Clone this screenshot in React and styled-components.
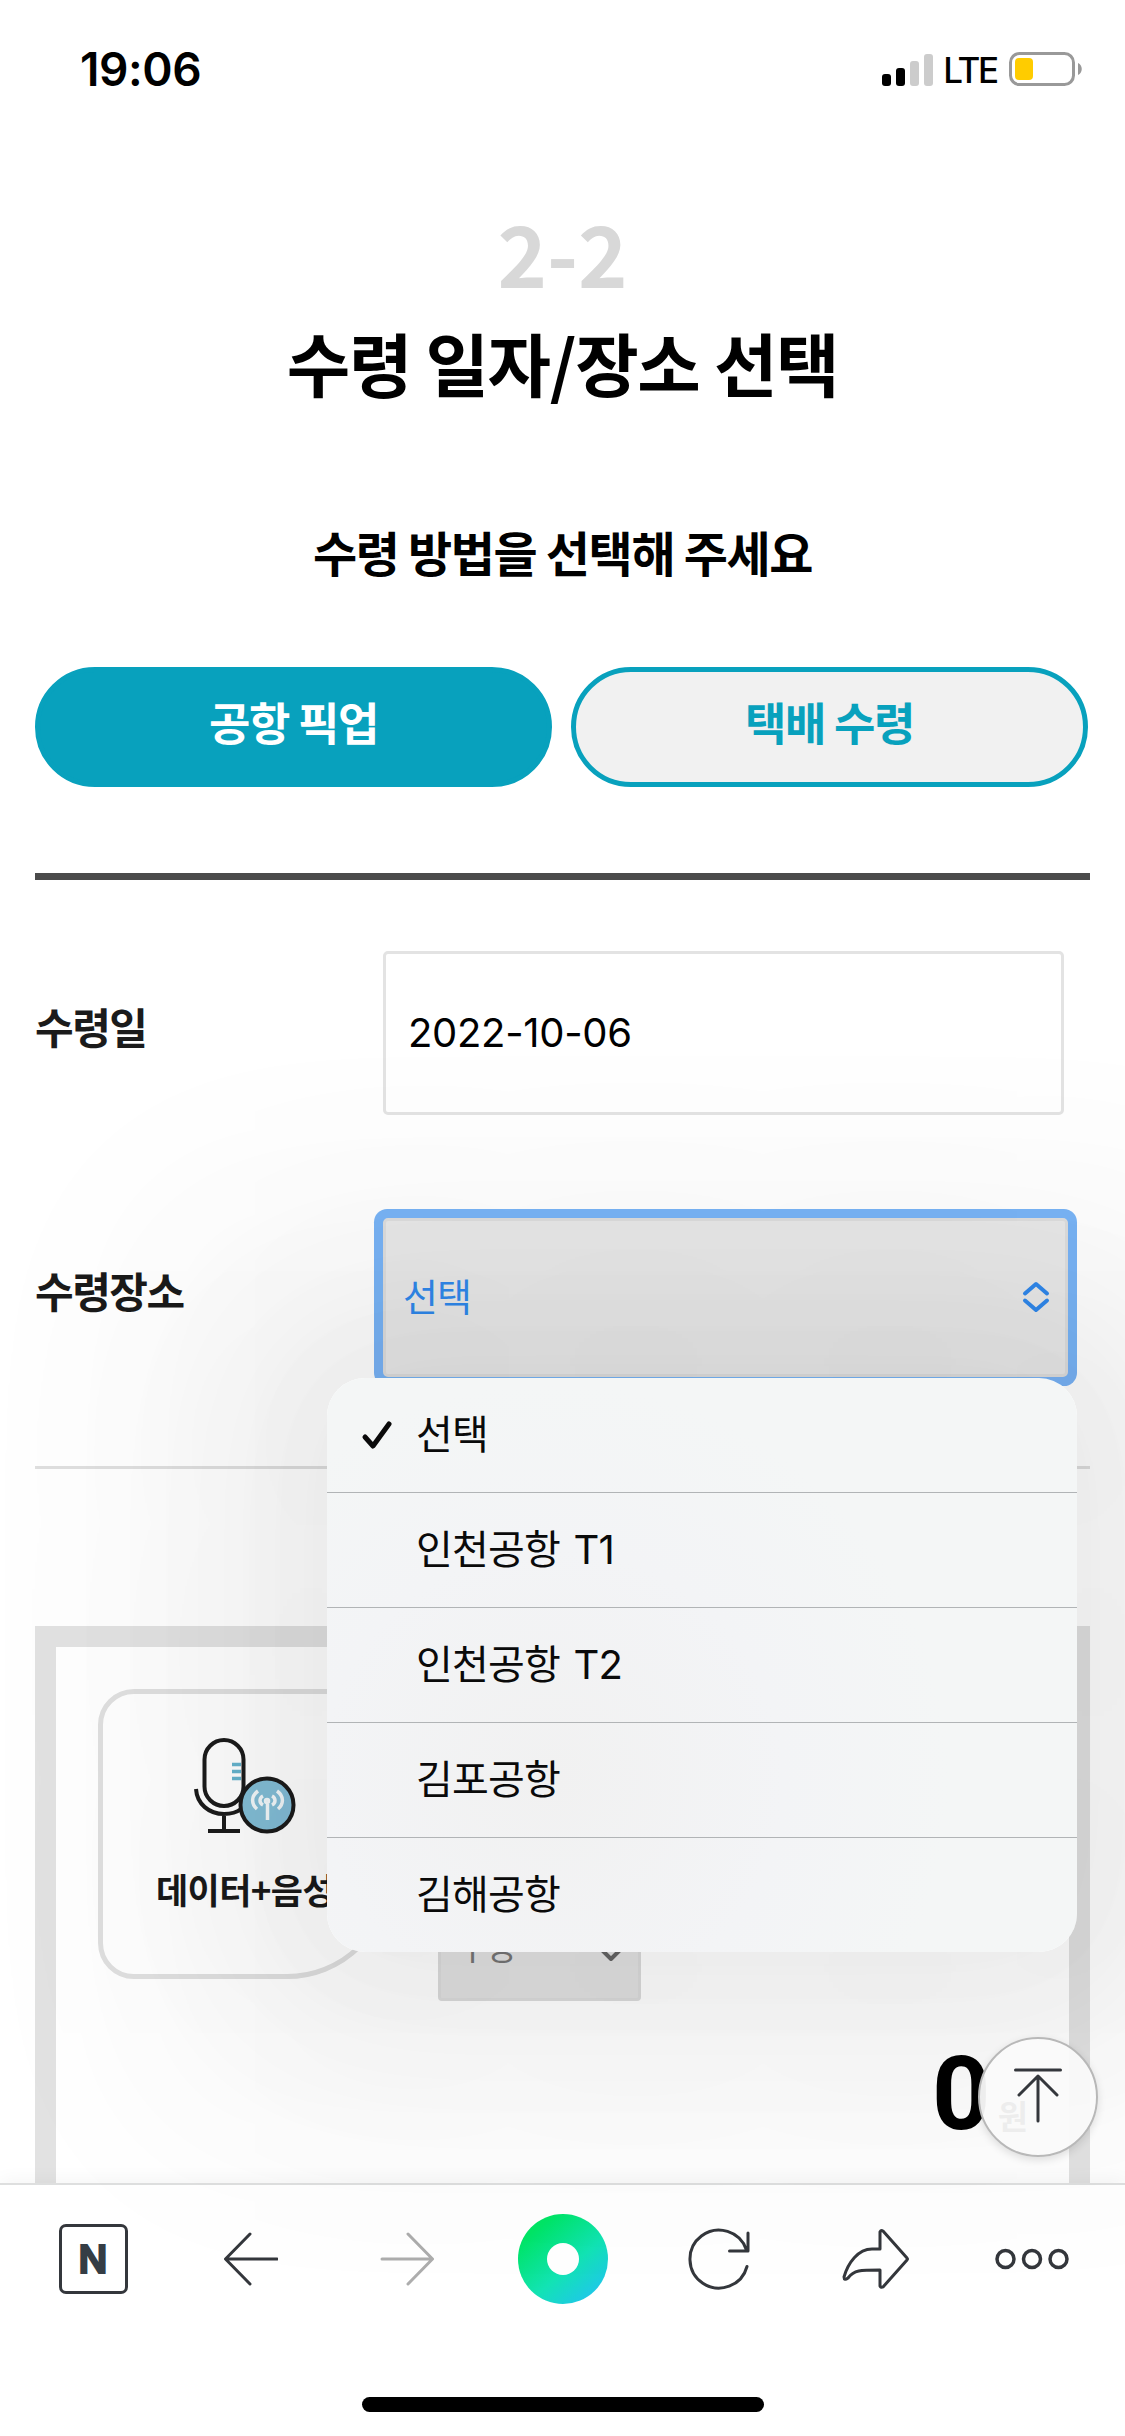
import React from "react";
import styled, { createGlobalStyle, css } from "styled-components";

const colorPrimario = "#08a1bd";
const azul = "#3089ec";
const negro100 = "#000";
const negro75 = "#1b1b1b";
const icono = "#34373c";
const gris0 = "#e3e3e3";

const fuenteWeb = `"Noto Sans CJK KR", sans-serif`;
const fuenteSistema = `Inter, "Noto Sans CJK KR", sans-serif`;

const GlobalStyle = createGlobalStyle`
    * {
        box-sizing: border-box;
    }

    body {
        margin: 0;
        background: #fff;
        font-family: ${fuenteWeb};
        color: ${negro100};
    }
`

const Screen = styled.div`
    position: relative;
    display: flex;
    flex-direction: column;
    width: 1125px;
    height: 2436px;
    overflow: hidden;
    background: #fff;
`

/* status bar */
const StatusBar = styled.header`
    display: flex;
    justify-content: space-between;
    align-items: center;
    height: 138px;
    padding: 0 42px 0 80px;
    font-family: ${fuenteSistema};
`

const Time = styled.span`
    font-size: 46px;
    font-weight: 600;
    letter-spacing: -0.4px;
`

const StatusIcons = styled.div`
    display: flex;
    align-items: center;
`

const Signal = styled.div`
    display: flex;
    align-items: flex-end;
    gap: 5px;
    height: 33px;
`

const SignalBar = styled.i`
    width: 9px;
    height: ${({ $height }) => $height}px;
    border-radius: 3px;
    background: ${({ $on }) => ($on ? negro100 : "#ccc")};
`

const Network = styled.span`
    margin: 2px 12px 0 10px;
    font-size: 35px;
    font-weight: 500;
    letter-spacing: -2.2px;
`

/* page content */
const Content = styled.main`
    flex: 1;
    min-height: 0;
    padding: 0 35px;
`

const Step = styled.div`
    margin-top: 71px;
    height: 86px;
    line-height: 86px;
    font-size: 84px;
    font-weight: 700;
    text-align: center;
    color: #d8d8d8;
`

const Title = styled.h1`
    margin: 22px 0 0;
    height: 90px;
    line-height: 90px;
    font-size: 69px;
    font-weight: 700;
    letter-spacing: -1.3px;
    text-align: center;
`

const Subtitle = styled.h2`
    margin: 109px 0 0;
    height: 70px;
    line-height: 70px;
    font-size: 48px;
    font-weight: 700;
    letter-spacing: -1.4px;
    text-align: center;
`

const Methods = styled.div`
    display: flex;
    gap: 19px;
    margin-top: 81px;
    padding-right: 2px;
`

const MethodButton = styled.button`
    flex: 1;
    height: 120px;
    padding: 0 0 10px;
    border: 5px solid ${colorPrimario};
    border-radius: 60px;
    background: #f1f1f1;
    color: ${colorPrimario};
    font-family: inherit;
    font-size: 45px;
    font-weight: 700;
    line-height: 60px;
    letter-spacing: -1.4px;

    ${({ $active }) => $active && css`
        background: ${colorPrimario};
        color: #fff;
    `}
`

const Form = styled.div`
    height: 596px;
    margin-top: 86px;
    padding-top: 71px;
    border-top: 7px solid #4b4b4b;
    border-bottom: 3px solid #dfdfdf;
`

const Field = styled.div`
    display: flex;
    align-items: center;
    height: 164px;
    margin-bottom: ${({ $space }) => $space || 0}px;
`

const Label = styled.label`
    width: 348px;
    padding-bottom: 15px;
    font-size: 42px;
    font-weight: 700;
    letter-spacing: -1.5px;
    line-height: 60px;
    color: ${negro75};
`

const DateInput = styled.div`
    display: flex;
    align-items: center;
    width: 681px;
    height: 164px;
    padding: 0 0 2px 22px;
    border: 3px solid ${gris0};
    border-radius: 5px;
    font-family: ${fuenteSistema};
    font-size: 40px;
    letter-spacing: -0.3px;
`

const SelectBox = styled.div`
    position: relative;
    display: flex;
    justify-content: space-between;
    align-items: center;
    width: 685px;
    height: 159px;
    padding: 0 15px 0 17px;
    border: 3px solid #dedede;
    border-radius: 5px;
    box-shadow: 0 0 0 9px #79b5f6;
    background: #e9e9e9;
    color: ${azul};
    font-size: 38px;
    letter-spacing: -1px;
`

const SelectValue = styled.span`
    padding-bottom: 6px;
`

/* open list of the select */
const Menu = styled.ul`
    position: absolute;
    z-index: 5;
    top: 157px;
    left: -59px;
    width: 750px;
    height: 574px;
    margin: 0;
    padding: 0;
    list-style: none;
    border-radius: 38px;
    background: radial-gradient(circle at 30% 70%, #f1f1f1 0, #f3f4f6 35%, #f4f6f6 60%);
    box-shadow:
        0 0 130px 30px rgba(0, 0, 0, 0.02),
        0 0 180px 90px rgba(0, 0, 0, 0.035),
        0 0 240px 160px rgba(0, 0, 0, 0.03),
        0 0 240px 240px rgba(0, 0, 0, 0.016);
    color: #0a0a0a;
    letter-spacing: 0;
`

const Option = styled.li`
    display: flex;
    align-items: center;
    height: 115px;
    padding-left: 34px;
    border-bottom: 1px solid #b1b4b6;
    font-family: ${fuenteSistema};
    font-size: 40px;
    line-height: 60px;
    letter-spacing: -0.8px;
    word-spacing: 3px;

    &:last-child {
        height: 114px;
        border-bottom: 0;
    }
`

const CheckSlot = styled.span`
    display: flex;
    width: 55px;
`

/* order box */
const OrderBox = styled.section`
    height: 558px;
    margin-top: 157px;
    padding: 42px 56px 0 42px;
    border: 21px solid #e2e2e2;
    border-bottom: 0;
    overflow: hidden;
`

const OrderRow = styled.div`
    display: flex;
    align-items: flex-start;
    gap: 46px;
`

const PlanCard = styled.div`
    display: flex;
    flex-direction: column;
    align-items: center;
    width: 294px;
    height: 290px;
    padding-top: 16px;
    border: 5px solid #e0e0e0;
    border-radius: 36px 36px 105px 36px;
    color: ${negro75};
    font-size: 35px;
    font-weight: 700;
    line-height: 58px;
    letter-spacing: -0.6px;
    white-space: nowrap;
`

const Quantity = styled.div`
    display: flex;
    align-items: center;
    justify-content: space-between;
    width: 203px;
    height: 112px;
    margin-top: 200px;
    padding: 0 14px 0 16px;
    border: 3px solid #dcdcdc;
    border-radius: 4px;
    background: #e3e3e3;
    color: #777;
    font-size: 34px;
    letter-spacing: -2px;
`

const QuantityArrow = styled.span`
    display: flex;
    padding-top: 17px;
`

const Total = styled.div`
    display: flex;
    justify-content: flex-end;
    align-items: baseline;
    gap: 7px;
    margin: 33px -15px 0 0;
    font-family: Roboto, ${fuenteWeb};
    font-weight: 700;
    font-size: 102px;
    line-height: 120px;
`

const Won = styled.small`
    font-family: ${fuenteWeb};
    font-size: 33px;
`

/* floating button over the page */
const TopButton = styled.button`
    position: absolute;
    z-index: 6;
    right: 27px;
    bottom: 279px;
    width: 120px;
    height: 120px;
    padding: 0;
    border: 2px solid #b8b8b8;
    border-radius: 50%;
    background: rgba(250, 250, 250, 0.95);
    box-shadow: 0 3px 8px rgba(0, 0, 0, 0.12);
`

/* browser bar */
const BrowserBar = styled.footer`
    display: flex;
    flex-direction: column;
    align-items: center;
    height: 253px;
    border-top: 2px solid #dedfdf;
    background: #fff;
    box-shadow: 0 -4px 16px rgba(0, 0, 0, 0.04);
`

const Tools = styled.nav`
    display: flex;
    justify-content: space-between;
    align-items: center;
    width: 100%;
    height: 148px;
    padding: 0 42px 0 42px;
`

const Tool = styled.button`
    display: flex;
    justify-content: center;
    align-items: center;
    width: 102px;
    height: 100px;
    padding: 0;
    border: 0;
    background: none;
`

const NaverBox = styled.span`
    display: flex;
    justify-content: center;
    align-items: center;
    width: 69px;
    height: 70px;
    border: 3px solid ${icono};
    border-radius: 7px;
    color: #353d45;
    font-family: ${fuenteSistema};
    font-size: 38px;
    font-weight: 600;
    -webkit-text-stroke: 2px #353d45;
    stroke-linejoin: round;
`

const GreenDot = styled.span`
    width: 90px;
    height: 90px;
    border: 29px solid transparent;
    border-radius: 50%;
    background: linear-gradient(#fff, #fff) padding-box, linear-gradient(140deg, #00e566 18%, #12e3b4 58%, #20c4f0 92%) border-box;
`

const HomeIndicator = styled.div`
    width: 402px;
    height: 15px;
    margin-top: 64px;
    border-radius: 8px;
    background: ${negro100};
`

const Line = ({ w, h, stroke = icono, width = 3, children }) => (
    <svg width={w} height={h} viewBox={`0 0 ${w} ${h}`} fill="none" stroke={stroke} strokeWidth={width} strokeLinecap="round" strokeLinejoin="round">
        {children}
    </svg>
)

const Battery = () => (
    <svg width="74" height="34" viewBox="0 0 74 34">
        <rect x="1.5" y="1.5" width="63" height="31" rx="9" fill="none" stroke="#999" strokeWidth="3" />
        <rect x="6" y="6" width="18" height="22" rx="4" fill="#fc0" />
        <path d="M69 11c5 2 5 10 0 12z" fill="#999" />
    </svg>
)

const Microphone = () => (
    <svg width="150" height="150" viewBox="0 0 150 150" fill="none" stroke="#1d1d1d" strokeWidth="4">
        <rect x="34.5" y="30" width="39" height="66" rx="19.5" />
        <path d="M26 79c1 15 13 25 28 25 7 0 12-1 17-5M54 104v16M38 121h32" />
        <path d="M62 54.5h9M62 61.5h9M62 68.5h9" stroke="#67b4cf" strokeWidth="3.5" />
        <circle cx="97" cy="95" r="26.5" fill="#84bfd8" />
        <g stroke="#f3f8fa" strokeWidth="3.5">
            <circle cx="97" cy="91" r="1.5" />
            <path d="M97.500 94v16M93 86c-4 2-4 7 0 9M102 86c4 2 4 7 0 9M88 81c-7 5-7 13-1 18M107 81c7 5 7 13 1 18" />
        </g>
    </svg>
)

const lugares = ["선택", "인천공항 T1", "인천공항 T2", "김포공항", "김해공항"]

const App = () => {
    return (
        <Screen>
            <GlobalStyle />
            <StatusBar>
                <Time>19:06</Time>
                <StatusIcons>
                    <Signal>
                        <SignalBar $height={12} $on />
                        <SignalBar $height={18} $on />
                        <SignalBar $height={25} />
                        <SignalBar $height={32} />
                    </Signal>
                    <Network>LTE</Network>
                    <Battery />
                </StatusIcons>
            </StatusBar>

            <Content>
                <Step>2-2</Step>
                <Title>수령 일자/장소 선택</Title>
                <Subtitle>수령 방법을 선택해 주세요</Subtitle>
                <Methods>
                    <MethodButton $active>공항 픽업</MethodButton>
                    <MethodButton>택배 수령</MethodButton>
                </Methods>

                <Form>
                    <Field $space={100}>
                        <Label>수령일</Label>
                        <DateInput>2022-10-06</DateInput>
                    </Field>
                    <Field>
                        <Label>수령장소</Label>
                        <SelectBox>
                            <SelectValue>선택</SelectValue>
                            <Line w={28} h={32} stroke={azul} width={4}>
                                <path d="M3 12.500 14 3l11 9.500M3 19.500 14 29l11-9.500" />
                            </Line>
                            <Menu>
                                {lugares.map((lugar, i) => (
                                    <Option key={lugar}>
                                        <CheckSlot>
                                            {i === 0 && (
                                                <Line w={32} h={32} stroke="#0a0a0a" width={5}>
                                                    <path d="M4 18l8 9L28 5" />
                                                </Line>
                                            )}
                                        </CheckSlot>
                                        {lugar}
                                    </Option>
                                ))}
                            </Menu>
                        </SelectBox>
                    </Field>
                </Form>

                <OrderBox>
                    <OrderRow>
                        <PlanCard>
                            <Microphone />
                            데이터+음성
                        </PlanCard>
                        <Quantity>
                            <span>수량</span>
                            <QuantityArrow>
                                <Line w={26} h={16} stroke="#666" width={4}>
                                    <path d="M3 3l10 10L23 3" />
                                </Line>
                            </QuantityArrow>
                        </Quantity>
                    </OrderRow>
                    <Total>0<Won>원</Won></Total>
                </OrderBox>
            </Content>

            <TopButton>
                <Line w={116} h={116}>
                    <path d="M35.500 31h45M58 37v45M39 56l19-19 19 19" />
                </Line>
            </TopButton>

            <BrowserBar>
                <Tools>
                    <Tool><NaverBox>N</NaverBox></Tool>
                    <Tool>
                        <Line w={56} h={56}>
                            <path d="M55 28H4M28 3L3.500 28 28 53" />
                        </Line>
                    </Tool>
                    <Tool>
                        <Line w={56} h={56} stroke="#adadad">
                            <path d="M4 28h50M30 3l24.500 25L30 53" />
                        </Line>
                    </Tool>
                    <Tool><GreenDot /></Tool>
                    <Tool>
                        <Line w={64} h={64}>
                            <path d="M60 39.500A29 29 0 1 1 59.500 23M61 6v18H42.500" />
                        </Line>
                    </Tool>
                    <Tool>
                        <Line w={68} h={60}>
                            <path d="M38 20v-17q1-2 3-1l24 27q1 1 0 2l-24 27q-2 1-3-1V41c-20 0-26 0-32 8q-4 3-4-1C6 34 16 20 30 20z" />
                        </Line>
                    </Tool>
                    <Tool>
                        <Line w={76} h={24} width={3.5}>
                            <circle cx="11.500" cy="12" r="8.500" />
                            <circle cx="38" cy="12" r="8.500" />
                            <circle cx="64.500" cy="12" r="8.500" />
                        </Line>
                    </Tool>
                </Tools>
                <HomeIndicator />
            </BrowserBar>
        </Screen>
    );
};

export default App;
